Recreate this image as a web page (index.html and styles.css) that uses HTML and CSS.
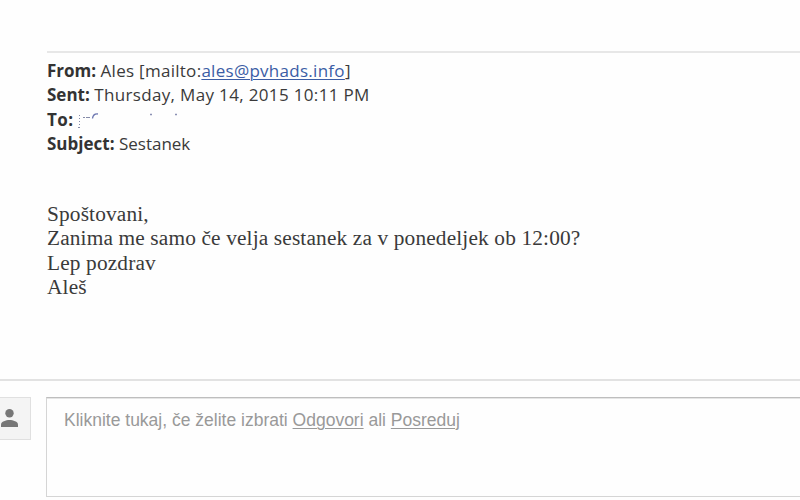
FILE: index.html
```html
<!DOCTYPE html>
<html lang="sl">
<head>
<meta charset="utf-8">
<title>Sestanek</title>
<link rel="stylesheet" href="styles.css">
</head>
<body>
<main class="message">
  <header class="headers">
    <div><b class="k-from">From:</b> <span class="v-from">Ales [mailto:<a class="mail" href="#">ales@pvhads.info</a>]</span></div>
    <div><b class="k-sent">Sent:</b> <span class="v-sent">Thursday, May 14, 2015 10:11 PM</span></div>
    <div class="to"><b class="k-to">To:</b>
      <svg class="erased" width="106" height="20" viewBox="0 0 106 20" fill="none">
        <path d="M2.500 3v1M2.500 6v1M2.500 9v1M2.500 12v1M1 15.500h2M6 5.500h2M9 5.500h4" stroke="#858ba8"/>
        <path d="M15.500 6.500Q16 1.500 21 2" stroke="#6c76b0" stroke-width="1.300"/>
        <path d="M73 2.500h2M98 2.500h2" stroke="#8b91b4" stroke-width="1.500"/>
      </svg>
    </div>
    <div><b class="k-subject">Subject:</b> <span class="v-subject">Sestanek</span></div>
  </header>
  <div class="body">
    <div>Spoštovani,</div>
    <div>Zanima me samo če velja sestanek za v ponedeljek ob 12:00?</div>
    <div>Lep pozdrav</div>
    <div>Aleš</div>
  </div>
</main>
<footer class="reply">
  <div class="avatar">
    <svg width="18" height="18" viewBox="0 0 18 18" fill="#777"><circle cx="9.500" cy="4.300" r="4.200"/><path d="M1 18v-2.500C1 12.500 6 11 9.500 11s8.500 1.500 8.500 4.500V18z"/></svg>
  </div>
  <div class="box"><span class="prompt">Kliknite tukaj, če želite izbrati <u>Odgovori</u> ali <u>Posreduj</u></span></div>
</footer>
</body>
</html>
```
FILE: styles.css
```css
* { box-sizing: border-box; }
body { margin: 0; width: 800px; height: 500px; overflow: hidden; background: #fefefe; color: #3a3a3a; }
.message { height: 381px; padding: 51px 0 0 47px; border-bottom: 2px solid #e2e2e2; }
.headers { border-top: 2px solid #e7e7e7; padding-top: 6px; font: 17px/24.4px "Open Sans", sans-serif; white-space: nowrap; }
.headers > div { height: 24.4px; }
.headers b { color: #333; }
.v-from { letter-spacing: 0.28px; }
.v-sent { letter-spacing: 0.34px; }
.k-to { letter-spacing: 0.4px; }
.mail { color: #3b5da5; text-decoration: underline; text-underline-offset: 2px; text-decoration-thickness: 1px; }
.to { display: flex; gap: 4px; }
.erased { margin-top: 4px; }
.body { margin-top: 45.4px; font: 21.33px/24.4px "Liberation Serif", serif; letter-spacing: 0.15px; white-space: nowrap; }
.reply { display: flex; padding-top: 16px; }
.avatar { width: 31px; height: 43px; background: #f4f4f4; border: 1px solid #e0e0e0; border-left: 0; padding: 11px 0 0; }
.avatar svg { display: block; }
.box { width: 754px; height: 100px; margin-left: 15px; border: 1px solid #d5d5d5; border-top: 1px solid #bebebe; border-right: 0; box-shadow: inset 0 1px #e5e5e5; padding: 9px 0 0 17px; font: 17.5px/26px "Liberation Sans", sans-serif; color: #999; white-space: nowrap; }
.box u { text-underline-offset: 2px; text-decoration-thickness: 1px; }
```
